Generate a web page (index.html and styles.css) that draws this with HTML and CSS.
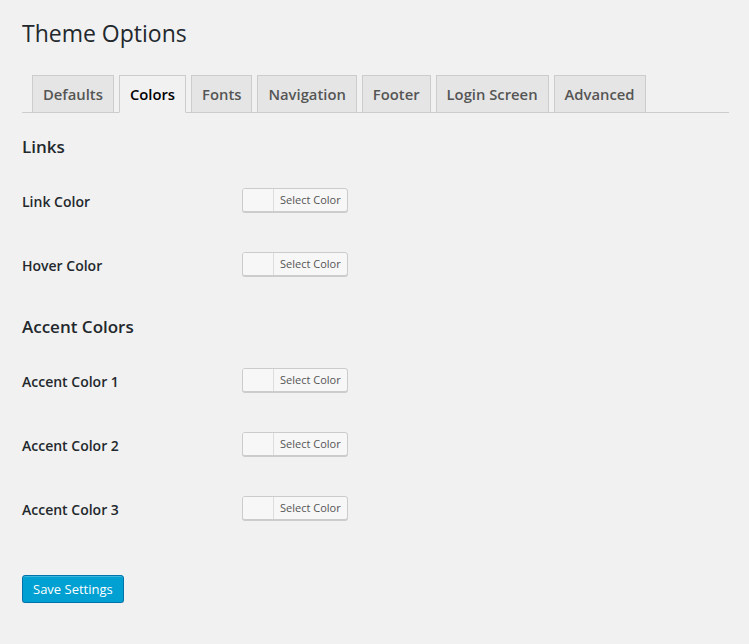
FILE: index.html
```html
<!DOCTYPE html>
<html lang="en">
<head>
<meta charset="utf-8">
<title>Theme Options</title>
<link rel="stylesheet" href="styles.css">
</head>
<body>
<div class="wrap">
  <h1 class="page-title">Theme Options</h1>
  <nav class="tabs">
    <a class="tab">Defaults</a>
    <a class="tab active">Colors</a>
    <a class="tab">Fonts</a>
    <a class="tab">Navigation</a>
    <a class="tab">Footer</a>
    <a class="tab">Login Screen</a>
    <a class="tab">Advanced</a>
  </nav>

  <h2 class="section first">Links</h2>
  <div class="row">
    <div class="label">Link Color</div>
    <button class="picker"><span class="swatch"></span><span class="picker-text">Select Color</span></button>
  </div>
  <div class="row">
    <div class="label">Hover Color</div>
    <button class="picker"><span class="swatch"></span><span class="picker-text">Select Color</span></button>
  </div>

  <h2 class="section">Accent Colors</h2>
  <div class="row">
    <div class="label">Accent Color 1</div>
    <button class="picker"><span class="swatch"></span><span class="picker-text">Select Color</span></button>
  </div>
  <div class="row">
    <div class="label">Accent Color 2</div>
    <button class="picker"><span class="swatch"></span><span class="picker-text">Select Color</span></button>
  </div>
  <div class="row">
    <div class="label">Accent Color 3</div>
    <button class="picker"><span class="swatch"></span><span class="picker-text">Select Color</span></button>
  </div>

  <div class="actions">
    <button class="btn-primary">Save Settings</button>
  </div>
</div>
</body>
</html>
```
FILE: styles.css
```css
html, body {
  margin: 0;
  padding: 0;
  background: #f1f1f1;
}
body {
  font-family: "Open Sans", "Liberation Sans", sans-serif;
  color: #23282d;
  font-size: 13px;
}
.wrap {
  padding: 10px 20px 0 22px;
}
.page-title {
  margin: 0;
  padding: 9px 0 4px;
  font-size: 23px;
  line-height: 29px;
  font-weight: 400;
  color: #23282d;
}
.tabs {
  display: flex;
  gap: 5px;
  margin-top: 23px;
  padding-left: 10px;
  border-bottom: 1px solid #ccc;
}
.tab {
  display: block;
  margin-bottom: -1px;
  padding: 6px 10px;
  border: 1px solid #ccc;
  background: #e5e5e5;
  color: #555;
  font-size: 14.8px;
  line-height: 24px;
  font-weight: 600;
}
.tab.active {
  background: #f1f1f1;
  color: #000;
  border-bottom-color: #f1f1f1;
}
.section {
  margin: 18px 0 10px;
  font-size: 17px;
  line-height: 24px;
  font-weight: 600;
  color: #23282d;
}
.section.first {
  margin-top: 22px;
}
.row {
  display: grid;
  grid-template-columns: 220px auto;
  align-items: center;
  justify-items: start;
  height: 64px;
}
.label {
  font-size: 14px;
  font-weight: 600;
  line-height: 24px;
  margin-top: 2px;
}
.picker {
  display: flex;
  align-items: stretch;
  height: 24px;
  padding: 0;
  margin: -2px 0 0;
  border: 1px solid #ccc;
  border-radius: 3px;
  background: #f7f7f7;
  box-shadow: 0 1px 0 #ccc;
  font-family: inherit;
  overflow: hidden;
}
.swatch {
  width: 30px;
  background: #f7f7f7;
}
.picker-text {
  border-left: 1px solid #ddd;
  padding: 0 6px;
  font-size: 11px;
  line-height: 22px;
  color: #555;
}
.actions {
  margin-top: 34px;
}
.btn-primary {
  height: 28px;
  padding: 0 10px;
  margin: 0;
  border: 1px solid #0073aa;
  border-radius: 3px;
  background: #00a0d2;
  color: #fff;
  font-family: inherit;
  font-size: 13px;
  line-height: 26px;
  box-shadow: inset 0 1px 0 rgba(120, 200, 230, 0.5), 0 1px 0 rgba(0, 0, 0, 0.15);
}
```
